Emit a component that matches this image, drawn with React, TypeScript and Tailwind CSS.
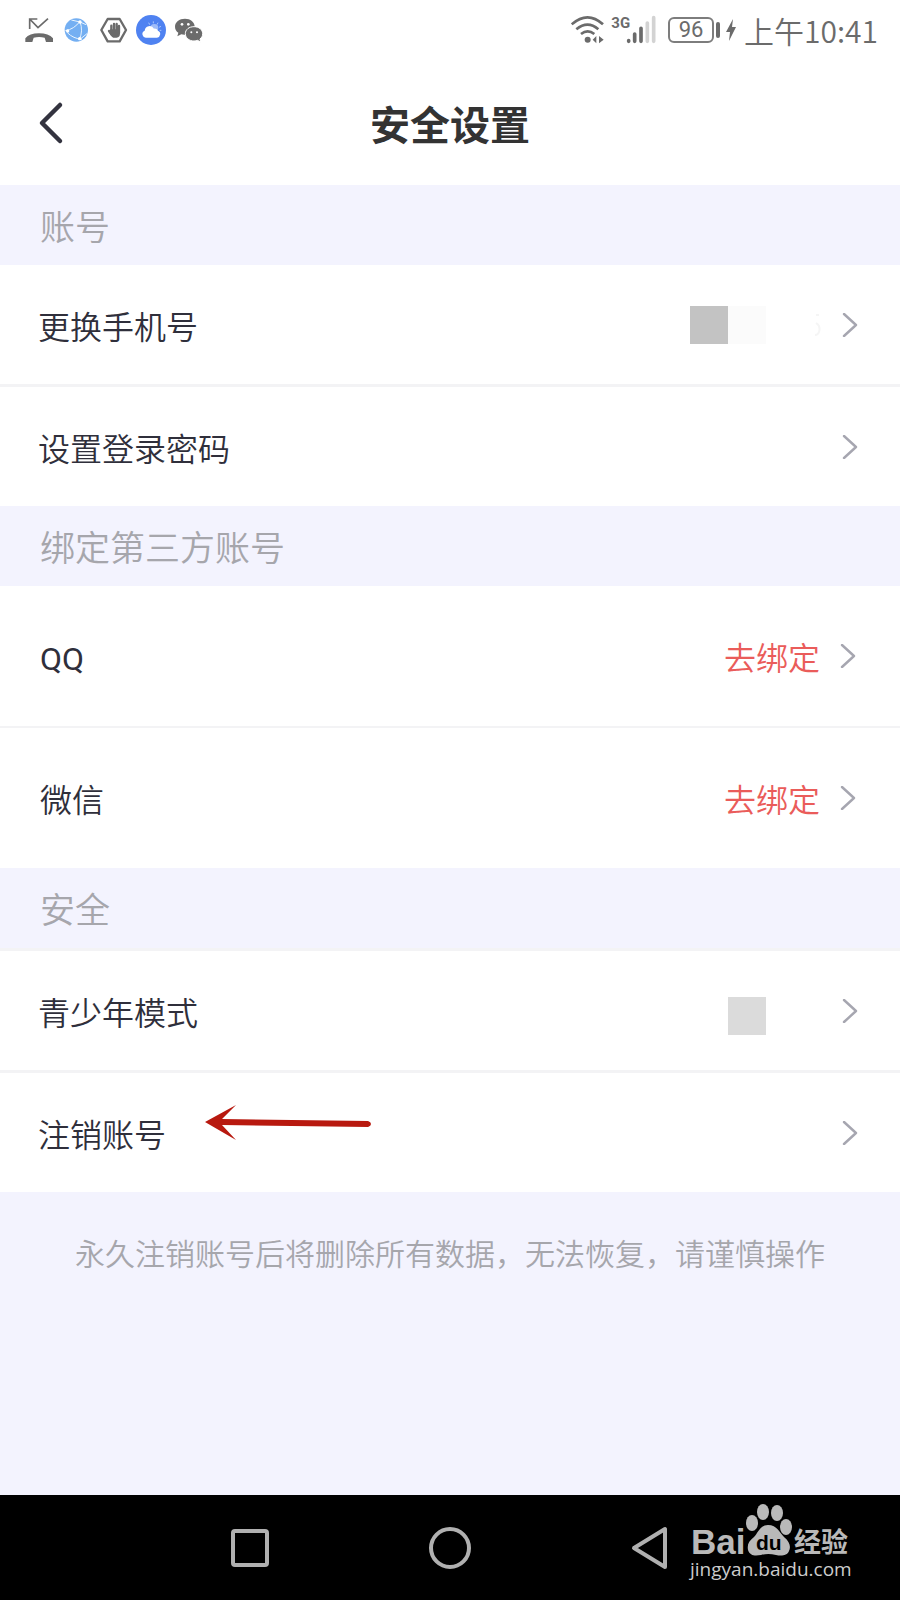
import { ReactNode } from "react";
import cn from "clsx";

const MissedCallIcon = () => (
  <svg className="h-[30px] w-[30px] overflow-visible" viewBox="72 45 90 90">
    <path
      d="M76 126V115Q88 100 117 100T159 115V126H138L134 113Q117 109 101 113L97 126Z"
      fill="#6b6b6b"
    />
    <path
      d="M89 87V57H112M89 57L114 83L144 56"
      fill="none"
      stroke="#6b6b6b"
      strokeWidth="5"
    />
  </svg>
);

const GlobeIcon = () => (
  <svg className="h-[30px] w-[30px] overflow-visible" viewBox="183 45 90 90">
    <circle cx="229" cy="90" r="35" fill="#74aff2" />
    <path
      d="M196 92Q222 88 240 64M240 64Q250 94 238 118M202 98Q220 116 246 118M214 60L240 66L258 74M240 118L262 100"
      fill="none"
      stroke="#e8f3fd"
      strokeWidth="3"
    />
    <circle cx="240" cy="66" r="5" fill="#fff" />
    <circle cx="203" cy="93" r="5" fill="#fff" />
    <circle cx="239" cy="116" r="5" fill="#fff" />
  </svg>
);

const HandIcon = () => (
  <svg className="h-[30px] w-[30px] overflow-visible" viewBox="294 45 90 90">
    <path
      d="M323 57H359L378 90L359 124H323L304 90Z"
      fill="none"
      stroke="#6b6b6b"
      strokeWidth="7"
      strokeLinejoin="round"
    />
    <path
      d="M334 98V77M342 96V72M350 96V72M357 98V78M327 93L335 104"
      fill="none"
      stroke="#6b6b6b"
      strokeWidth="7"
      strokeLinecap="round"
    />
    <path d="M331 88H360V100Q360 113 350 113H340Q333 111 326 94Z" fill="#6b6b6b" />
  </svg>
);

const WeatherIcon = () => (
  <svg className="h-[30px] w-[30px] overflow-visible" viewBox="405 45 90 90">
    <circle cx="453" cy="90" r="45" fill="#4f82f1" />
    <path
      d="M460 64V70M446 68L449 74M474 68L471 74M483 79L477 82M484 91H479"
      stroke="#a9c4fa"
      strokeWidth="3"
    />
    <circle cx="463" cy="84" r="12" fill="#9fbcf8" />
    <path
      d="M440 113A11 11 0 0 1 434 92A15 15 0 0 1 462 86A12 12 0 0 1 474 92A11 11 0 0 1 471 113Z"
      fill="#fff"
    />
  </svg>
);

const WechatIcon = () => (
  <svg className="h-[30px] w-[30px] overflow-visible" viewBox="516 45 90 90">
    <path
      d="M555 56C538 56 525 66 525 80C525 88 529 94 535 98L532 109L544 103Q550 105 558 104C572 103 584 94 584 80C584 66 571 56 555 56Z"
      fill="#6b6b6b"
    />
    <path
      d="M582 80C567 80 556 89 556 101S567 123 582 123Q588 123 593 121L602 127L600 117C605 113 608 108 608 101C608 89 597 80 582 80Z"
      fill="#6b6b6b"
      stroke="#fff"
      strokeWidth="3"
    />
    <circle cx="546" cy="73" r="4" fill="#fff" />
    <circle cx="565" cy="73" r="4" fill="#fff" />
    <circle cx="574" cy="97" r="3" fill="#fff" />
    <circle cx="591" cy="97" r="3" fill="#fff" />
  </svg>
);

const WifiIcon = () => (
  <svg className="h-[30px] w-[33px]" viewBox="66 45 99 90">
    <g fill="none" stroke="#6b6b6b" strokeWidth="8">
      <path d="M68 73Q116 31 162 73" />
      <path d="M82 88Q116 60 148 88" />
      <path d="M96 102Q116 86 136 102" />
    </g>
    <circle cx="116" cy="119" r="9" fill="#6b6b6b" />
    <path d="M131 119L142 108V130ZM150 108V130L164 119Z" fill="#6b6b6b" />
  </svg>
);

const SignalIcon = () => (
  <svg className="h-[30px] w-11 overflow-visible" viewBox="192 45 132 90">
    <text
      x="190"
      y="84"
      fill="#6b6b6b"
      fontFamily="Roboto, sans-serif"
      fontSize="45"
      fontWeight="700"
    >
      3G
    </text>
    <g strokeWidth="11" strokeLinecap="round">
      <path d="M242 122V124M260 102V124M279 85V124" stroke="#6b6b6b" />
      <path d="M298 69V124M317 53V124" stroke="#d3d3d3" />
    </g>
  </svg>
);

const Chevron = () => (
  <svg className="h-6 w-4 shrink-0" viewBox="0 0 16 24">
    <path
      d="M2 1L14 12L2 23"
      fill="none"
      stroke="#a6a6b0"
      strokeWidth="2.4"
      strokeLinecap="round"
      strokeLinejoin="round"
    />
  </svg>
);

const StatusBar = () => (
  <div className="flex h-[60px] items-center justify-between pr-[22px] pl-6 text-[#6b6b6b]">
    <div className="flex items-center gap-[7px]">
      <MissedCallIcon />
      <GlobeIcon />
      <HandIcon />
      <WeatherIcon />
      <WechatIcon />
    </div>
    <div className="flex items-center">
      <WifiIcon />
      <div className="ml-2">
        <SignalIcon />
      </div>
      <div className="ml-3 flex h-[26px] w-[46px] items-center justify-center rounded-md border-2 border-[#7d7d7d] font-[Roboto,sans-serif] text-[22px] leading-6">
        96
      </div>
      <div className="ml-0.5 h-4 w-1 rounded-full bg-[#6b6b6b]" />
      <svg className="ml-1.5 h-6 w-[10px]" viewBox="0 0 10 24">
        <path d="M7 1L0 14H4L3 23L10 9H6Z" fill="#6b6b6b" />
      </svg>
      <div className="ml-2 text-[30px] leading-9 font-[350]">上午10:41</div>
    </div>
  </div>
);

interface SectionProps {
  title: string;
  tall?: boolean;
  lined?: boolean;
  children: ReactNode;
}

const Section = ({ title, tall, lined, children }: SectionProps) => (
  <section>
    <h2 className="flex min-h-20 items-center pl-10 text-[35px] leading-10 font-[350] text-[#a6a6ac]">
      {title}
    </h2>
    <div
      className={cn("flex flex-col bg-[#f3f3f5]", {
        "gap-[2px]": tall,
        "gap-[3px]": !tall,
        "border-t-[3px] border-[#f3f3f5]": lined,
      })}
    >
      {children}
    </div>
  </section>
);

interface RowProps {
  label: ReactNode;
  tall?: boolean;
  children?: ReactNode;
}

const Row = ({ label, tall, children }: RowProps) => (
  <button
    type="button"
    className={cn(
      "flex w-full items-center justify-between bg-white text-left text-[32px] leading-10 font-[350] text-[#2f2f3b]",
      {
        "min-h-[140px] pr-11 pl-10": tall,
        "min-h-[119px] pr-[42px] pl-[38px]": !tall,
      }
    )}
  >
    <span>{label}</span>
    <span className="flex items-center">
      {children}
      <Chevron />
    </span>
  </button>
);

const BindAction = () => <span className="mr-5 text-[#ea5c5a]">去绑定</span>;

const PointerArrow = () => (
  <svg
    className="absolute top-8 left-[205px] h-9 w-[166px]"
    viewBox="0 0 166 36"
  >
    <path
      d="M0 17L31 0L17 14L163 16Q166 17 166 19T163 22L17 20L31 35Z"
      fill="#b8190f"
    />
  </svg>
);

const Watermark = () => (
  <div className="absolute top-2 right-12 flex w-[162px] flex-col text-[#b9b9b9]">
    <svg className="h-[54px] w-[162px] overflow-visible" viewBox="0 0 162 54">
      <text
        x="1"
        y="51"
        fill="#b9b9b9"
        fontFamily="Liberation Sans, sans-serif"
        fontSize="35"
        fontWeight="700"
      >
        Bai
      </text>
      <g fill="#b9b9b9">
        <ellipse cx="62" cy="20" rx="6" ry="8" />
        <ellipse cx="73" cy="9" rx="6" ry="8" />
        <ellipse cx="87" cy="10" rx="6" ry="8" />
        <ellipse cx="96" cy="24" rx="6" ry="8" />
        <path d="M78 22C87 22 90 30 94 34C100 39 101 44 99 48C97 53 91 53 86 52Q78 50 71 52C65 53 60 53 58 47C57 41 59 38 64 34C68 30 70 22 78 22Z" />
      </g>
      <text
        x="66"
        y="47"
        fill="#000"
        fontFamily="Liberation Sans, sans-serif"
        fontSize="21"
        fontWeight="700"
      >
        du
      </text>
      <text
        x="104"
        y="49"
        fill="#b9b9b9"
        fontFamily="Noto Sans CJK SC, sans-serif"
        fontSize="27"
        fontWeight="700"
      >
        经验
      </text>
    </svg>
    <span className="font-['Open_Sans',sans-serif] text-[19px] leading-6 text-[#cccccc]">
      jingyan.baidu.com
    </span>
  </div>
);

const NavBar = () => (
  <nav className="relative bg-black">
    <div className="mx-auto grid h-[105px] w-2/3 grid-cols-3 place-items-center">
      <button type="button" aria-label="最近任务">
        <svg className="h-11 w-11" viewBox="0 0 44 44">
          <rect x="5" y="5" width="34" height="34" rx="2" fill="none" stroke="#b0b0b0" strokeWidth="4" />
        </svg>
      </button>
      <button type="button" aria-label="主屏幕">
        <svg className="h-11 w-11" viewBox="0 0 44 44">
          <circle cx="22" cy="22" r="19" fill="none" stroke="#b0b0b0" strokeWidth="4" />
        </svg>
      </button>
      <button type="button" aria-label="返回">
        <svg className="h-11 w-11" viewBox="0 0 44 44">
          <path
            d="M6 22L37 3V41Z"
            fill="none"
            stroke="#b0b0b0"
            strokeWidth="4"
            strokeLinejoin="round"
          />
        </svg>
      </button>
    </div>
    <Watermark />
  </nav>
);

export default function App() {
  return (
    <div className="flex min-h-screen flex-col bg-[#f3f3fe] font-['Noto_Sans_CJK_SC',sans-serif]">
      <div className="bg-white">
        <StatusBar />
        <header className="grid h-[125px] grid-cols-[1fr_auto_1fr] items-center">
          <button type="button" aria-label="返回" className="ml-9 w-fit">
            <svg className="h-11 w-7" viewBox="0 0 28 44">
              <path
                d="M24 4L6 22L24 40"
                fill="none"
                stroke="#33333f"
                strokeWidth="4.5"
                strokeLinecap="round"
                strokeLinejoin="round"
              />
            </svg>
          </button>
          <h1 className="text-[40px] leading-12 font-bold text-[#333333]">
            安全设置
          </h1>
        </header>
      </div>
      <main className="flex-1">
        <Section title="账号">
          <Row label="更换手机号">
            <span className="flex h-[38px] w-[152px] items-center">
              <span className="h-[38px] w-[38px] bg-[#c3c3c3]" />
              <span className="h-[38px] w-[38px] bg-[#fbfbfb]" />
              <svg className="ml-11 h-6 w-3" viewBox="0 0 12 24">
                <path
                  d="M6 2H9M6 10Q11 13 9 19Q8 22 5 22"
                  fill="none"
                  stroke="#f5f5f5"
                  strokeWidth="2"
                />
              </svg>
            </span>
          </Row>
          <Row label="设置登录密码" />
        </Section>
        <Section title="绑定第三方账号" tall>
          <Row
            label={
              <span className="font-[Roboto,sans-serif] leading-none font-normal">
                QQ
              </span>
            }
            tall
          >
            <BindAction />
          </Row>
          <Row label="微信" tall>
            <BindAction />
          </Row>
        </Section>
        <Section title="安全" lined>
          <Row label="青少年模式">
            <span className="flex h-12 w-[114px] items-end">
              <span className="h-[38px] w-[38px] bg-[#dbdbdb]" />
            </span>
          </Row>
          <div className="relative">
            <Row label="注销账号" />
            <PointerArrow />
          </div>
        </Section>
        <p className="px-6 pt-10 text-center text-[30px] leading-10 font-[350] text-[#a6a6ac]">
          永久注销账号后将删除所有数据，无法恢复，请谨慎操作
        </p>
      </main>
      <NavBar />
    </div>
  );
}
